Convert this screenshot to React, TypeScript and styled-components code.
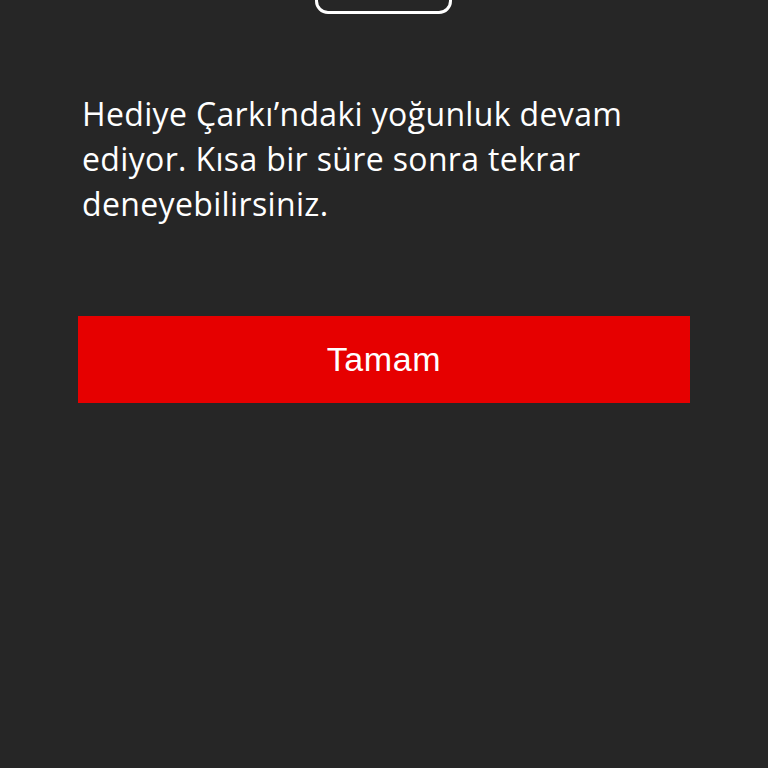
import React from 'react'
import styled, { createGlobalStyle } from 'styled-components'

const GlobalStyle = createGlobalStyle`
  html, body {
    margin: 0;
    padding: 0;
    background: #262626;
  }
  body {
    font-family: "Open Sans", sans-serif;
  }
`

const Page = styled.div`
  height: 768px;
  overflow: hidden;
  display: flex;
  flex-direction: column;
  padding: 0 78px;
  box-sizing: border-box;
`

const Handle = styled.div`
  align-self: center;
  width: 131px;
  height: 36px;
  margin-top: -28px;
  margin-left: -2px;
  border: 3.5px solid #ffffff;
  border-radius: 13px;
`

const Message = styled.p`
  margin: 77px 0 0 4px;
  max-width: 560px;
  color: #ffffff;
  font-family: "Open Sans", sans-serif;
  font-size: 32px;
  letter-spacing: 0.35px;
  line-height: 45px;
  font-weight: 400;
`

const OkButton = styled.button`
  margin-top: 90px;
  height: 87px;
  width: 100%;
  border: 0;
  border-radius: 0;
  background: #e60000;
  color: #ffffff;
  font-family: "Liberation Sans", Arial, sans-serif;
  font-size: 34px;
  letter-spacing: 0.6px;
  cursor: pointer;
`

const App: React.FC = () => {
  return (
    <>
      <GlobalStyle />
      <Page>
        <Handle />
        <Message>
          Hediye Çarkı’ndaki yoğunluk devam ediyor. Kısa bir süre sonra tekrar deneyebilirsiniz.
        </Message>
        <OkButton type="button">Tamam</OkButton>
      </Page>
    </>
  )
}

export default App
